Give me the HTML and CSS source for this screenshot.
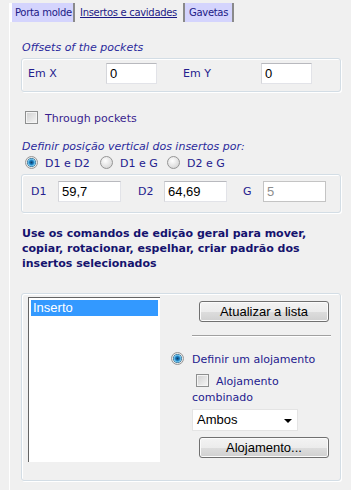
FILE: index.html
```html
<!DOCTYPE html>
<html lang="pt">
<head>
    <meta charset="UTF-8">
    <meta name="viewport" content="width=device-width, initial-scale=1.0">
    <title>Insertos e cavidades</title>
    <link rel="stylesheet" href="styles.css">
</head>
<body>
    <div class="frame">
        <div class="tabs">
            <span class="tab tab-molde">Porta molde</span>
            <span class="tab tab-insertos active">Insertos e cavidades</span>
            <span class="tab tab-gavetas">Gavetas</span>
        </div>

        <div class="panel">
            <div class="legend legend-offsets">Offsets of the pockets</div>
            <div class="group offsets">
                <span class="lbl lbl-em">Em X</span>
                <input class="field field-em" type="text" value="0">
                <span class="lbl lbl-em lbl-emy">Em Y</span>
                <input class="field field-em" type="text" value="0">
            </div>

            <div class="check-row through">
                <span class="check"></span>Through pockets
            </div>

            <div class="legend legend-pos">Definir posição vertical dos insertos por:</div>
            <div class="radio-row">
                <span class="opt opt-1"><span class="radio on"></span>D1 e D2</span>
                <span class="opt opt-2"><span class="radio"></span>D1 e G</span>
                <span class="opt opt-3"><span class="radio"></span>D2 e G</span>
            </div>
            <div class="group dims">
                <span class="lbl lbl-d1">D1</span>
                <input class="field field-d" type="text" value="59,7">
                <span class="lbl lbl-d2">D2</span>
                <input class="field field-d" type="text" value="64,69">
                <span class="lbl lbl-g">G</span>
                <input class="field field-d" type="text" value="5" disabled>
            </div>

            <p class="hint">
                Use os comandos de edição geral para mover, copiar, rotacionar, espelhar, criar padrão dos insertos selecionados
            </p>

            <div class="group inserts">
                <div class="listbox">
                    <div class="item selected">Inserto</div>
                </div>
                <div class="side">
                    <div class="btn btn-refresh">Atualizar a lista</div>
                    <div class="sep"></div>
                    <div class="radio-line"><span class="radio on"></span>Definir um alojamento</div>
                    <div class="combo-line"><span class="check"></span>Alojamento<br>combinado</div>
                    <div class="select">Ambos<span class="arrow"></span></div>
                    <div class="btn btn-housing">Alojamento...</div>
                </div>
            </div>
        </div>
    </div>
</body>
</html>
```
FILE: styles.css
```css
* {
    box-sizing: border-box;
}
html, body {
    margin: 0;
    padding: 0;
    height: 100%;
    overflow: hidden;
}
body {
    background-color: #f0f0f0;
    font-family: "DejaVu Sans", Verdana, sans-serif;
    font-size: 11px;
    line-height: 14px;
    color: #24208e;
}
.frame {
    margin: 3px 0 0 9px;
    border-left: 1px solid #ffffff;
    min-height: 100%;
}

/* tabs */
.tabs {
    display: flex;
    height: 19px;
}
.tab {
    height: 19px;
    line-height: 19px;
    font-size: 10px;
    letter-spacing: -0.3px;
    color: #1c1a86;
    border-right: 2px solid #8a8a8a;
    white-space: nowrap;
}
.tab-molde {
    width: 65px;
    padding-left: 3px;
    border-left: 2px solid #ffffff;
    background-color: #d4d4fd;
}
.tab-insertos {
    width: 110px;
    padding-left: 5px;
}
.tab-insertos span,
.tab.active {
    text-decoration: underline;
}
.tab-gavetas {
    width: 49px;
    padding-left: 4px;
    background-color: #d4d4fd;
}

/* panel */
.panel {
    padding-left: 11px;
}
.legend {
    font-style: italic;
    padding-left: 1px;
    color: #2b2a9c;
}
.legend-offsets {
    margin-top: 19px;
}
.group {
    width: 320px;
    border: 1px solid #d3dde5;
    border-radius: 3px;
    box-shadow: inset 1px 1px 0 #ffffff, 1px 1px 0 #ffffff;
}
.offsets {
    margin-top: 3px;
    height: 34px;
    display: flex;
    align-items: flex-start;
    padding: 4px 0 0 6px;
}
.lbl {
    height: 21px;
    line-height: 21px;
}
.lbl-em {
    width: 78px;
}
.lbl-emy {
    margin-left: 26px;
}
.field {
    height: 21px;
    padding: 0 3px;
    border: 1px solid #e2e3e8;
    border-top-color: #b8b9be;
    border-left-color: #d5d6da;
    background: #ffffff;
    font-family: "Liberation Sans", Arial, sans-serif;
    font-size: 13px;
    color: #000000;
    outline: none;
}
.field-em {
    width: 51px;
}
.field:disabled {
    border-color: #c4c4c4;
    color: #8d8d8d;
}

/* checkbox and radio */
.check {
    display: inline-block;
    width: 13px;
    height: 13px;
    border: 1px solid #8e8f8f;
    background: linear-gradient(135deg, #cfcfcf, #f6f6f6);
    box-shadow: inset 0 0 0 1px #f4f4f4;
    vertical-align: -2px;
    margin-right: 7px;
}
.radio {
    display: inline-block;
    width: 13px;
    height: 13px;
    border: 1px solid #959595;
    border-radius: 50%;
    background: radial-gradient(circle at 40% 35%, #ffffff, #d6d6d6 80%);
    vertical-align: -2px;
    margin-right: 7px;
}
.radio.on {
    background: radial-gradient(circle at 50% 50%, #0b3c66 0, #1b7dc0 2px, #7fd0f4 3.5px, #4a7fa0 4.2px, #e6e6e6 4.8px, #f8f8f8 100%);
}
.through {
    margin-top: 19px;
    padding-left: 4px;
    height: 14px;
    color: #3a1f8e;
}
.legend-pos {
    margin-top: 15px;
}
.radio-row {
    margin-top: 2px;
    padding-left: 4px;
    display: flex;
    height: 14px;
}
.opt {
    white-space: nowrap;
}
.opt-1 {
    width: 75px;
}
.opt-2 {
    width: 67px;
}

/* D1 D2 G */
.dims {
    margin-top: 4px;
    height: 39px;
    display: flex;
    align-items: flex-start;
    padding: 6px 0 0 9px;
}
.field-d {
    width: 63px;
}
.lbl-d1 {
    width: 27px;
}
.lbl-d2 {
    width: 26px;
    margin-left: 17px;
}
.lbl-g {
    width: 20px;
    margin-left: 16px;
}

.hint {
    margin: 13px 0 0 1px;
    width: 320px;
    font-weight: bold;
    line-height: 15px;
    color: #15136e;
}

/* inserts box */
.inserts {
    margin-top: 22px;
    height: 188px;
    display: flex;
    align-items: flex-start;
    padding: 3px 0 0 6px;
}
.listbox {
    width: 132px;
    height: 165px;
    background: #ffffff;
    border-left: 1px solid #646464;
    border-top: 1px solid #646464;
    padding: 2px;
}
.item {
    height: 16px;
    line-height: 16px;
    padding-left: 2px;
    font-family: "Liberation Sans", Arial, sans-serif;
    font-size: 13px;
    color: #000000;
}
.item.selected {
    background-color: #3399ff;
    color: #ffffff;
}
.side {
    margin-left: 11px;
    width: 164px;
}
.btn {
    width: 130px;
    height: 21px;
    margin-left: 28px;
    border: 1px solid #707070;
    border-radius: 3px;
    background: linear-gradient(#f3f3f3 0%, #ececec 50%, #dddddd 51%, #d0d0d0 100%);
    box-shadow: inset 0 0 0 1px #fbfbfb;
    font-family: "Liberation Sans", Arial, sans-serif;
    font-size: 13px;
    line-height: 19px;
    text-align: center;
    color: #000000;
}
.btn-refresh {
    margin-top: 4px;
}
.sep {
    margin: 13px 0 0 21px;
    width: 139px;
    height: 2px;
    border-top: 1px solid #a0a0a0;
    border-bottom: 1px solid #ffffff;
}
.radio-line {
    margin-top: 15px;
    height: 14px;
    white-space: nowrap;
}
.radio-line .radio {
    margin-right: 8px;
}
.combo-line {
    margin-top: 8px;
    padding-left: 21px;
    line-height: 16px;
}
.combo-line .check {
    margin-left: 4px;
}
.select {
    position: relative;
    margin: 3px 0 0 21px;
    width: 106px;
    height: 22px;
    padding-left: 4px;
    background: #ffffff;
    border: 1px solid #e4e4e4;
    font-family: "Liberation Sans", Arial, sans-serif;
    font-size: 13px;
    line-height: 20px;
    color: #000000;
}
.arrow {
    position: absolute;
    right: 5px;
    top: 9px;
    width: 0;
    height: 0;
    border-left: 4px solid transparent;
    border-right: 4px solid transparent;
    border-top: 4px solid #000000;
}
.btn-housing {
    margin-top: 6px;
}
```
